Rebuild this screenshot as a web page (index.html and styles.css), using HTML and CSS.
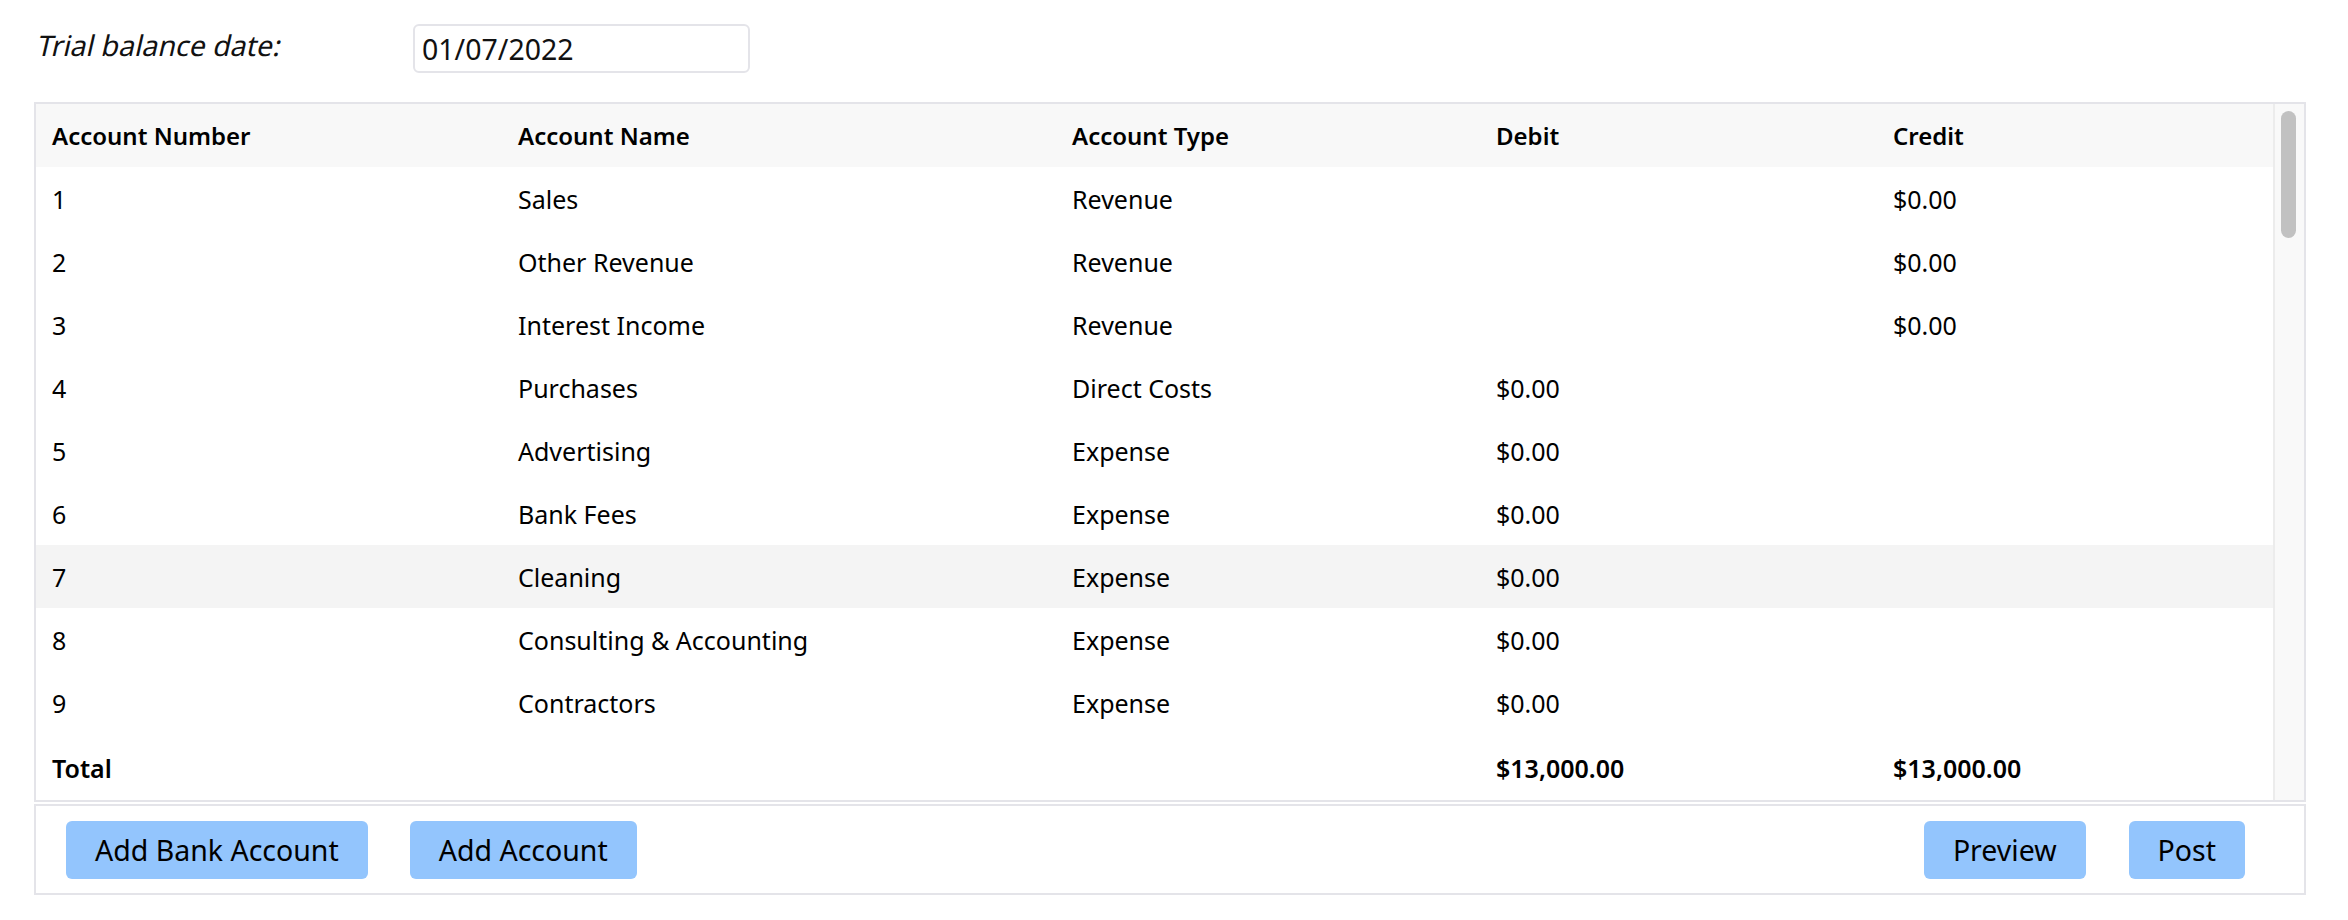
FILE: index.html
```html
<!DOCTYPE html>
<html lang="en">
<head>
<meta charset="utf-8">
<title>Trial Balance</title>
<link rel="stylesheet" href="styles.css">
</head>
<body>
<div class="page">
  <div class="date-row">
    <label class="date-label" for="tb-date"><span class="oblique">Trial balance date:</span></label>
    <input id="tb-date" class="date-input" type="text" value="01/07/2022">
  </div>

  <div class="table-frame">
    <div class="table-viewport">
      <table class="tb-table">
        <colgroup>
          <col class="c-num"><col class="c-name"><col class="c-type"><col class="c-debit"><col class="c-credit">
        </colgroup>
        <thead>
          <tr><th>Account Number</th><th>Account Name</th><th>Account Type</th><th>Debit</th><th>Credit</th></tr>
        </thead>
        <tbody>
          <tr><td>1</td><td>Sales</td><td>Revenue</td><td></td><td>$0.00</td></tr>
          <tr><td>2</td><td>Other Revenue</td><td>Revenue</td><td></td><td>$0.00</td></tr>
          <tr><td>3</td><td>Interest Income</td><td>Revenue</td><td></td><td>$0.00</td></tr>
          <tr><td>4</td><td>Purchases</td><td>Direct Costs</td><td>$0.00</td><td></td></tr>
          <tr><td>5</td><td>Advertising</td><td>Expense</td><td>$0.00</td><td></td></tr>
          <tr><td>6</td><td>Bank Fees</td><td>Expense</td><td>$0.00</td><td></td></tr>
          <tr class="is-hover"><td>7</td><td>Cleaning</td><td>Expense</td><td>$0.00</td><td></td></tr>
          <tr><td>8</td><td>Consulting &amp; Accounting</td><td>Expense</td><td>$0.00</td><td></td></tr>
          <tr><td>9</td><td>Contractors</td><td>Expense</td><td>$0.00</td><td></td></tr>
          <tr><td>10</td><td>Depreciation</td><td>Expense</td><td>$0.00</td><td></td></tr>
          <tr><td>11</td><td>Entertainment</td><td>Expense</td><td>$0.00</td><td></td></tr>
          <tr><td>12</td><td>Freight &amp; Courier</td><td>Expense</td><td>$0.00</td><td></td></tr>
          <tr><td>13</td><td>General Expenses</td><td>Expense</td><td>$0.00</td><td></td></tr>
          <tr><td>14</td><td>Insurance</td><td>Expense</td><td>$0.00</td><td></td></tr>
          <tr><td>15</td><td>Interest Expense</td><td>Expense</td><td>$0.00</td><td></td></tr>
          <tr><td>16</td><td>Legal expenses</td><td>Expense</td><td>$0.00</td><td></td></tr>
          <tr><td>17</td><td>Light, Power, Heating</td><td>Expense</td><td>$0.00</td><td></td></tr>
          <tr><td>18</td><td>Motor Vehicle Expenses</td><td>Expense</td><td>$0.00</td><td></td></tr>
          <tr><td>19</td><td>Office Expenses</td><td>Expense</td><td>$0.00</td><td></td></tr>
          <tr><td>20</td><td>Printing &amp; Stationery</td><td>Expense</td><td>$0.00</td><td></td></tr>
          <tr><td>21</td><td>Rent</td><td>Expense</td><td>$0.00</td><td></td></tr>
          <tr><td>22</td><td>Repairs and Maintenance</td><td>Expense</td><td>$0.00</td><td></td></tr>
          <tr><td>23</td><td>Salaries</td><td>Expense</td><td>$0.00</td><td></td></tr>
          <tr><td>24</td><td>Superannuation</td><td>Expense</td><td>$0.00</td><td></td></tr>
          <tr><td>25</td><td>Subscriptions</td><td>Expense</td><td>$0.00</td><td></td></tr>
          <tr><td>26</td><td>Telephone &amp; Internet</td><td>Expense</td><td>$0.00</td><td></td></tr>
          <tr><td>27</td><td>Travel - National</td><td>Expense</td><td>$0.00</td><td></td></tr>
          <tr><td>28</td><td>Travel - International</td><td>Expense</td><td>$0.00</td><td></td></tr>
          <tr><td>29</td><td>Bank Revaluations</td><td>Expense</td><td>$0.00</td><td></td></tr>
          <tr><td>30</td><td>Unrealised Currency Gains</td><td>Expense</td><td>$0.00</td><td></td></tr>
          <tr><td>31</td><td>Realised Currency Gains</td><td>Expense</td><td>$0.00</td><td></td></tr>
          <tr><td>32</td><td>Income Tax Expense</td><td>Expense</td><td>$0.00</td><td></td></tr>
          <tr><td>33</td><td>Accounts Receivable</td><td>Current Asset</td><td>$0.00</td><td></td></tr>
          <tr><td>34</td><td>Prepayments</td><td>Current Asset</td><td>$0.00</td><td></td></tr>
          <tr><td>35</td><td>Inventory</td><td>Inventory</td><td>$0.00</td><td></td></tr>
          <tr><td>36</td><td>Office Equipment</td><td>Fixed Asset</td><td>$0.00</td><td></td></tr>
          <tr><td>37</td><td>Accum. Depreciation - Office</td><td>Fixed Asset</td><td></td><td>$0.00</td></tr>
          <tr><td>38</td><td>Computer Equipment</td><td>Fixed Asset</td><td>$0.00</td><td></td></tr>
          <tr><td>39</td><td>Accum. Depreciation - Computer</td><td>Fixed Asset</td><td></td><td>$0.00</td></tr>
          <tr><td>40</td><td>Accounts Payable</td><td>Current Liability</td><td></td><td>$0.00</td></tr>
          <tr><td>41</td><td>Unpaid Expense Claims</td><td>Current Liability</td><td></td><td>$0.00</td></tr>
          <tr><td>42</td><td>Wages Payable</td><td>Current Liability</td><td></td><td>$0.00</td></tr>
          <tr><td>43</td><td>GST</td><td>Current Liability</td><td></td><td>$0.00</td></tr>
          <tr><td>44</td><td>Income Tax Payable</td><td>Current Liability</td><td></td><td>$0.00</td></tr>
          <tr><td>45</td><td>Superannuation Payable</td><td>Current Liability</td><td></td><td>$0.00</td></tr>
          <tr><td>46</td><td>PAYG Withholdings Payable</td><td>Current Liability</td><td></td><td>$0.00</td></tr>
          <tr><td>47</td><td>Loan</td><td>Liability</td><td></td><td>$0.00</td></tr>
          <tr><td>48</td><td>Owner A Funds Introduced</td><td>Equity</td><td></td><td>$13,000.00</td></tr>
          <tr><td>49</td><td>Owner A Drawings</td><td>Equity</td><td>$0.00</td><td></td></tr>
          <tr><td>50</td><td>Retained Earnings</td><td>Equity</td><td></td><td>$0.00</td></tr>
          <tr><td>51</td><td>Owner A Share Capital</td><td>Equity</td><td></td><td>$0.00</td></tr>
          <tr><td>52</td><td>Suspense</td><td>Current Liability</td><td></td><td>$0.00</td></tr>
          <tr><td>53</td><td>Business Bank Account</td><td>Bank</td><td>$13,000.00</td><td></td></tr>
        </tbody>
        <tfoot>
          <tr><td>Total</td><td></td><td></td><td>$13,000.00</td><td>$13,000.00</td></tr>
        </tfoot>
      </table>
    </div>
    <div class="scrollbar" aria-hidden="true">
      <div class="scrollbar-thumb"></div>
    </div>
  </div>

  <div class="action-bar">
    <div class="btn-group">
      <button class="btn" type="button">Add Bank Account</button>
      <button class="btn" type="button">Add Account</button>
    </div>
    <div class="btn-group btn-group-right">
      <button class="btn" type="button">Preview</button>
      <button class="btn" type="button">Post</button>
    </div>
  </div>
</div>
</body>
</html>
```

FILE: styles.css
```css
* {
  box-sizing: border-box;
}

html, body {
  margin: 0;
  padding: 0;
  background: #ffffff;
}

body {
  font-family: "Noto Sans", "Open Sans", "Liberation Sans", sans-serif;
  color: #000000;
}

.page {
  padding: 24px 42px 0 34px;
}

/* ---------- date row ---------- */
.date-row {
  display: flex;
  align-items: flex-start;
  padding-left: 2px;
  margin-bottom: 29px;
}

.date-label {
  width: 377px;
  margin-top: 2px;
  font-size: 28.5px;
  line-height: 39px;
  color: #111111;
}

.oblique {
  display: inline-block;
  transform: skewX(-13deg);
  transform-origin: 0 75%;
}

.date-input {
  width: 337px;
  height: 49px;
  padding: 0 7px;
  border: 2px solid #e4e4e9;
  border-radius: 6px;
  font-family: "Noto Sans", "Open Sans", sans-serif;
  font-size: 28.5px;
  color: #111111;
  background: #ffffff;
  outline: none;
}

/* ---------- table ---------- */
.table-frame {
  display: flex;
  height: 700px;
  border: 2px solid #e4e4e9;
}

.table-viewport {
  flex: 1;
  min-width: 0;
  overflow: hidden;
}

.scrollbar {
  flex: 0 0 31px;
  background: #f9f9f9;
  border-left: 2px solid #ececec;
  padding: 7px 0 0 6px;
}

.scrollbar-thumb {
  width: 15px;
  height: 127px;
  border-radius: 8px;
  background: #c1c1c1;
}

.tb-table {
  width: 100%;
  table-layout: fixed;
  border-collapse: separate;
  border-spacing: 0;
  font-size: 25px;
  line-height: 33px;
}

.c-num { width: 466px; }
.c-name { width: 554px; }
.c-type { width: 424px; }
.c-debit { width: 397px; }

.tb-table th,
.tb-table td {
  padding: 15px 16px;
  text-align: left;
  white-space: nowrap;
  overflow: hidden;
}

.tb-table thead th {
  position: sticky;
  top: 0;
  z-index: 2;
  background: #f8f8f8;
  font-size: 24px;
  font-weight: 600;
}

.tb-table tbody td {
  padding-top: 16px;
  padding-bottom: 14px;
  background: #ffffff;
  font-weight: 400;
}

.tb-table tbody tr.is-hover td {
  background: #f4f4f4;
}

.tb-table tfoot td {
  position: sticky;
  bottom: 0;
  z-index: 2;
  background: #ffffff;
  font-size: 25px;
  font-weight: 600;
}

/* ---------- action bar ---------- */
.action-bar {
  display: flex;
  justify-content: space-between;
  align-items: center;
  margin-top: 2px;
  padding: 15px 59px 14px 30px;
  border: 2px solid #e4e4e9;
}

.btn-group {
  display: flex;
  gap: 42px;
}

.btn-group-right {
  gap: 43px;
}

.btn {
  height: 58px;
  padding: 0 29px;
  border: none;
  border-radius: 6px;
  background: #93c5fd;
  color: #000000;
  font-family: "Noto Sans", "Open Sans", sans-serif;
  font-size: 28.5px;
  line-height: 39px;
  cursor: pointer;
}
```
